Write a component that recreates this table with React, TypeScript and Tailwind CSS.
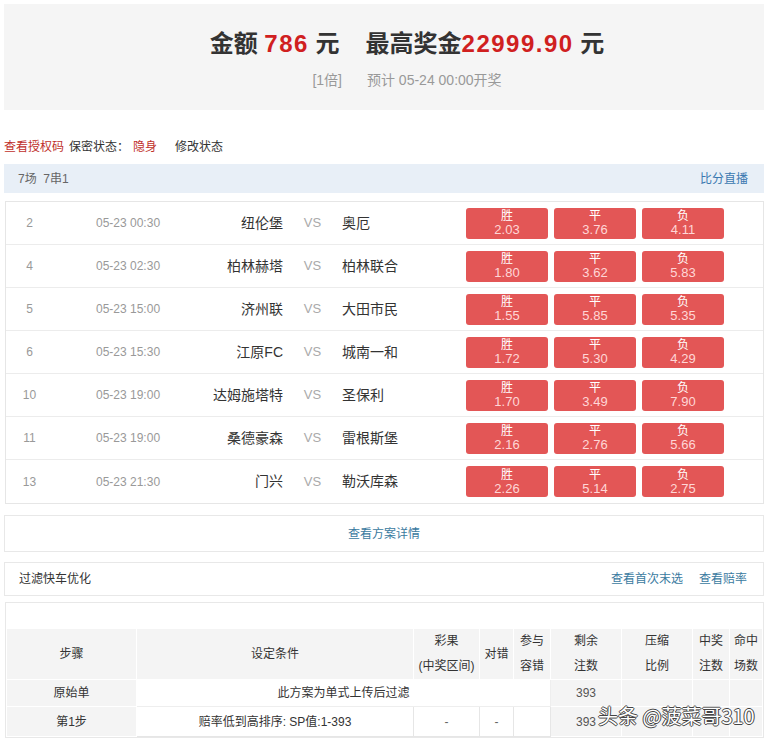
import React from "react";

type Match = {
  no: string;
  time: string;
  home: string;
  away: string;
  odds: [string, string, string];
};

const matches: Match[] = [
  { no: "2", time: "05-23 00:30", home: "纽伦堡", away: "奥厄", odds: ["2.03", "3.76", "4.11"] },
  { no: "4", time: "05-23 02:30", home: "柏林赫塔", away: "柏林联合", odds: ["1.80", "3.62", "5.83"] },
  { no: "5", time: "05-23 15:00", home: "济州联", away: "大田市民", odds: ["1.55", "5.85", "5.35"] },
  { no: "6", time: "05-23 15:30", home: "江原FC", away: "城南一和", odds: ["1.72", "5.30", "4.29"] },
  { no: "10", time: "05-23 19:00", home: "达姆施塔特", away: "圣保利", odds: ["1.70", "3.49", "7.90"] },
  { no: "11", time: "05-23 19:00", home: "桑德豪森", away: "雷根斯堡", odds: ["2.16", "2.76", "5.66"] },
  { no: "13", time: "05-23 21:30", home: "门兴", away: "勒沃库森", odds: ["2.26", "5.14", "2.75"] },
];

const labels = ["胜", "平", "负"];

function OddsButton({ label, value }: { label: string; value: string }) {
  return (
    <div className="w-[82px] h-[31px] rounded-[3px] bg-[#e35656] flex flex-col items-center justify-center text-[12px] leading-[14px]">
      <span className="text-white">{label}</span>
      <span className="text-[#ffd6d6] text-[13px]">{value}</span>
    </div>
  );
}

function MatchRow({ m }: { m: Match }) {
  return (
    <div className="h-[43px] flex items-center">
      <div className="w-[47px] text-center text-[12px] text-[#999]">{m.no}</div>
      <div className="w-[123px] pl-[43px] text-[12px] text-[#999] whitespace-nowrap">{m.time}</div>
      <div className="w-[107px] text-right text-[14px] text-[#333] whitespace-nowrap">{m.home}</div>
      <div className="w-[59px] text-center text-[13px] text-[#aaa]">VS</div>
      <div className="w-[124px] text-[14px] text-[#333] whitespace-nowrap">{m.away}</div>
      <div className="flex gap-[6px]">
        {m.odds.map((o, i) => (
          <OddsButton key={i} label={labels[i]} value={o} />
        ))}
      </div>
    </div>
  );
}

export default function App() {
  return (
    <div className="relative w-[768px] h-[742px] overflow-hidden bg-white text-[#333] font-['Liberation_Sans','Noto_Sans_CJK_SC',sans-serif]">
      {/* 顶部金额 */}
      <div className="mx-[4px] mt-[4px] h-[106px] bg-[#f5f5f5] flex flex-col items-center pt-[24px] pl-[46px]">
        <div className="text-[24px] leading-[32px] font-bold text-[#333] whitespace-nowrap">
          金额 <span className="text-[#d0201f] tracking-[1.5px]">786</span> 元
          <span className="ml-[26px]">最高奖金</span>
          <span className="text-[#d0201f] tracking-[1.5px]">22999.90</span> 元
        </div>
        <div className="mt-[10px] text-[14px] leading-[20px] text-[#999] flex gap-[25px]">
          <span>[1倍]</span>
          <span>预计 05-24 00:00开奖</span>
        </div>
      </div>

      <div className="mt-[27px] h-[20px] flex items-center px-[4px] text-[12px] whitespace-nowrap">
        <span className="text-[#c0302b]">查看授权码</span>
        <span className="ml-[5px]">保密状态：</span>
        <span className="ml-[4px] text-[#c0302b]">隐身</span>
        <span className="ml-[18px]">修改状态</span>
      </div>

      <div className="mt-[7px] mx-[4px] h-[29px] bg-[#e8eff7] flex items-center justify-between pl-[14px] pr-[16px] text-[12px]">
        <span className="text-[#666]">7场&nbsp;&nbsp;7串1</span>
        <span className="text-[#3a78b0]">比分直播</span>
      </div>

      {/* 比赛列表 */}
      <div className="mt-[8px] ml-[5px] w-[759px] border border-[#e6e6e6] divide-y divide-[#ececec]">
        {matches.map((m) => (
          <MatchRow key={m.no} m={m} />
        ))}
      </div>

      <div className="mt-[11px] mx-[4px] h-[37px] border border-[#e8e8e8] flex items-center justify-center text-[12px] text-[#3a7aa0]">
        查看方案详情
      </div>

      <div className="mt-[10px] mx-[4px] h-[34px] border border-[#e8e8e8] flex items-center justify-between pl-[14px] pr-[16px] text-[12px]">
        <span className="text-[#333]">过滤快车优化</span>
        <div className="flex gap-[16px] text-[#3a7aa0]">
          <span>查看首次末选</span>
          <span>查看赔率</span>
        </div>
      </div>

      {/* 过滤步骤表 */}
      <div className="mt-[6px] ml-[5px] w-[759px] border border-[#e8e8e8]">
        <div className="h-[25px]" />
        <table className="w-full table-fixed border-collapse text-[12px] text-center bg-[#f4f4f4]">
          <colgroup>
            <col className="w-[130px]" />
            <col className="w-[277px]" />
            <col className="w-[66px]" />
            <col className="w-[34px]" />
            <col className="w-[37px]" />
            <col className="w-[71px]" />
            <col className="w-[71px]" />
            <col className="w-[37px]" />
            <col />
          </colgroup>
          <thead>
            <tr className="h-[50px] leading-[25px] text-[#333]">
              <th className="font-normal border border-white">步骤</th>
              <th className="font-normal border border-white">设定条件</th>
              <th className="font-normal border border-white">
                彩果
                <br />
                (中奖区间)
              </th>
              <th className="font-normal border border-white">对错</th>
              <th className="font-normal border border-white">
                参与
                <br />
                容错
              </th>
              <th className="font-normal border border-white">
                剩余
                <br />
                注数
              </th>
              <th className="font-normal border border-white">
                压缩
                <br />
                比例
              </th>
              <th className="font-normal border border-white">
                中奖
                <br />
                注数
              </th>
              <th className="font-normal border border-white">
                命中
                <br />
                场数
              </th>
            </tr>
          </thead>
          <tbody>
            <tr className="h-[27px]">
              <td className="border border-white">原始单</td>
              <td colSpan={4} className="bg-white border border-[#eeeeee]">
                此方案为单式上传后过滤
              </td>
              <td className="border border-white text-[#555]">393</td>
              <td className="border border-white" />
              <td className="border border-white" />
              <td className="border border-white" />
            </tr>
            <tr className="h-[30px]">
              <td className="border border-white">第1步</td>
              <td className="bg-white border border-[#e6e6e6]">赔率低到高排序: SP值:1-393</td>
              <td className="bg-white border border-[#e6e6e6] text-[#666]">-</td>
              <td className="bg-white border border-[#e6e6e6] text-[#666]">-</td>
              <td className="bg-white border border-[#e6e6e6]" />
              <td className="border border-white text-[#555]">393</td>
              <td className="border border-white" />
              <td className="border border-white" />
              <td className="border border-white" />
            </tr>
          </tbody>
        </table>
      </div>

      {/* 水印 */}
      <div className="absolute left-[598px] top-[702px] text-[20px] leading-[28px] text-white whitespace-nowrap font-['Noto_Sans_CJK_SC',sans-serif] [text-shadow:1px_0_0_#444,-1px_0_0_#444,0_1px_0_#444,0_-1px_0_#444]">
        头条 @菠菜哥310
      </div>
    </div>
  );
}
